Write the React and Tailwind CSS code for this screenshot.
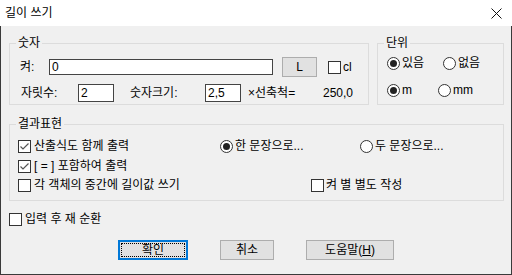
import React from "react";

const Check = ({ checked }) => (
  <span className="w-[13px] h-[13px] shrink-0 bg-white border border-[#333] flex items-center justify-center">
    {checked && (
      <svg width="11" height="11" viewBox="0 0 11 11">
        <path d="M1.5 5.5 L4 8 L9.5 2.5" fill="none" stroke="#555" strokeWidth="1.2" />
      </svg>
    )}
  </span>
);

const Radio = ({ checked }) => (
  <span className="w-[13px] h-[13px] shrink-0 bg-white border border-[#333] rounded-full flex items-center justify-center">
    {checked && <span className="w-[7px] h-[7px] rounded-full bg-[#222]" />}
  </span>
);

const Group = ({ label, className, children }) => (
  <div className={"relative border border-[#dcdcdc] " + className}>
    <span className="absolute -top-[8px] left-[6px] px-[2px] bg-[#f0f0f0] leading-[14px]">{label}</span>
    {children}
  </div>
);

const Button = ({ children, main, className }) => (
  <div
    className={
      "h-[20px] flex items-center justify-center bg-[#e1e1e1] " +
      (main ? "border-2 border-[#0078d7] p-[1px] " : "border border-[#adadad] ") +
      className
    }
  >
    {main ? (
      <span className="w-full h-full border border-dotted border-black flex items-center justify-center">{children}</span>
    ) : (
      children
    )}
  </div>
);

export default function App() {
  return (
    <div className="w-[512px] h-[275px] bg-[#f0f0f0] flex flex-col text-[12px] text-black font-['Liberation_Sans','Noto_Sans_CJK_KR',sans-serif] leading-[14px]">
      {/* title bar */}
      <div className="h-[26px] shrink-0 bg-white flex items-center justify-between pl-[5px] pr-[10px]">
        <span className="text-[12px]">길이 쓰기</span>
        <svg width="11" height="11" viewBox="0 0 11 11">
          <path d="M0.5 0.5 L10.5 10.5 M10.5 0.5 L0.5 10.5" stroke="#111" strokeWidth="1" />
        </svg>
      </div>

      <div className="flex-1 border-l border-r border-b border-[#3a3a3a] pl-[8px] pt-[17px]">
        <div className="flex gap-[8px]">
          <Group label="숫자" className="w-[360px] h-[62px] pt-[13px] pl-[10px]">
            <div className="flex items-center h-[20px]">
              <span className="w-[29px]">켜:</span>
              <div className="w-[224px] h-[16px] bg-white border border-[#444] pl-[2px] flex items-center">0</div>
              <Button className="ml-[9px] w-[35px]">L</Button>
              <span className="ml-[11px]"><Check /></span>
              <span className="ml-[2px]">cl</span>
            </div>
            <div className="flex items-center h-[18px] mt-[7px]">
              <span className="w-[58px] pl-[1px]">자릿수:</span>
              <div className="w-[36px] h-[18px] bg-white border border-[#444] pl-[2px] flex items-center">2</div>
              <span className="ml-[16px] w-[75px]">숫자크기:</span>
              <div className="w-[36px] h-[18px] bg-white border border-[#444] pl-[2px] flex items-center">2,5</div>
              <span className="ml-[7px] w-[75px]">×선축척=</span>
              <span>250,0</span>
            </div>
          </Group>

          <Group label="단위" className="w-[127px] h-[62px] pt-[12px] pl-[9px]">
            <div className="flex items-center h-[14px]">
              <span className="flex items-center gap-[2px] w-[56px]"><Radio checked />있음</span>
              <span className="flex items-center gap-[2px]"><Radio />없음</span>
            </div>
            <div className="flex items-center h-[14px] mt-[13px]">
              <span className="flex items-center gap-[2px] w-[51px]"><Radio checked />m</span>
              <span className="flex items-center gap-[2px]"><Radio />mm</span>
            </div>
          </Group>
        </div>

        <Group label="결과표현" className="w-[495px] h-[77px] mt-[19px] pt-[14px] pl-[8px]">
          <div className="flex items-center h-[14px]">
            <span className="flex items-center gap-[3px] w-[202px]"><Check checked />산출식도 함께 출력</span>
            <span className="flex items-center gap-[2px] w-[140px]"><Radio checked />한 문장으로...</span>
            <span className="flex items-center gap-[2px]"><Radio />두 문장으로...</span>
          </div>
          <div className="flex items-center h-[14px] mt-[6px]">
            <span className="flex items-center gap-[3px]"><Check checked />[ = ] 포함하여 출력</span>
          </div>
          <div className="flex items-center h-[14px] mt-[5px]">
            <span className="flex items-center gap-[3px] w-[293px]"><Check />각 객체의 중간에 길이값 쓰기</span>
            <span className="flex items-center gap-[2px]"><Check />켜 별 별도 작성</span>
          </div>
        </Group>

        <div className="flex items-center h-[14px] mt-[11px] gap-[3px]">
          <Check />
          <span>입력 후 재 순환</span>
        </div>

        <div className="flex mt-[14px] ml-[109px] gap-[32px]">
          <Button main className="w-[70px]">확인</Button>
          <Button className="w-[54px]">취소</Button>
          <Button className="w-[88px]">
            도움말(<span className="underline">H</span>)
          </Button>
        </div>
      </div>
    </div>
  );
}
